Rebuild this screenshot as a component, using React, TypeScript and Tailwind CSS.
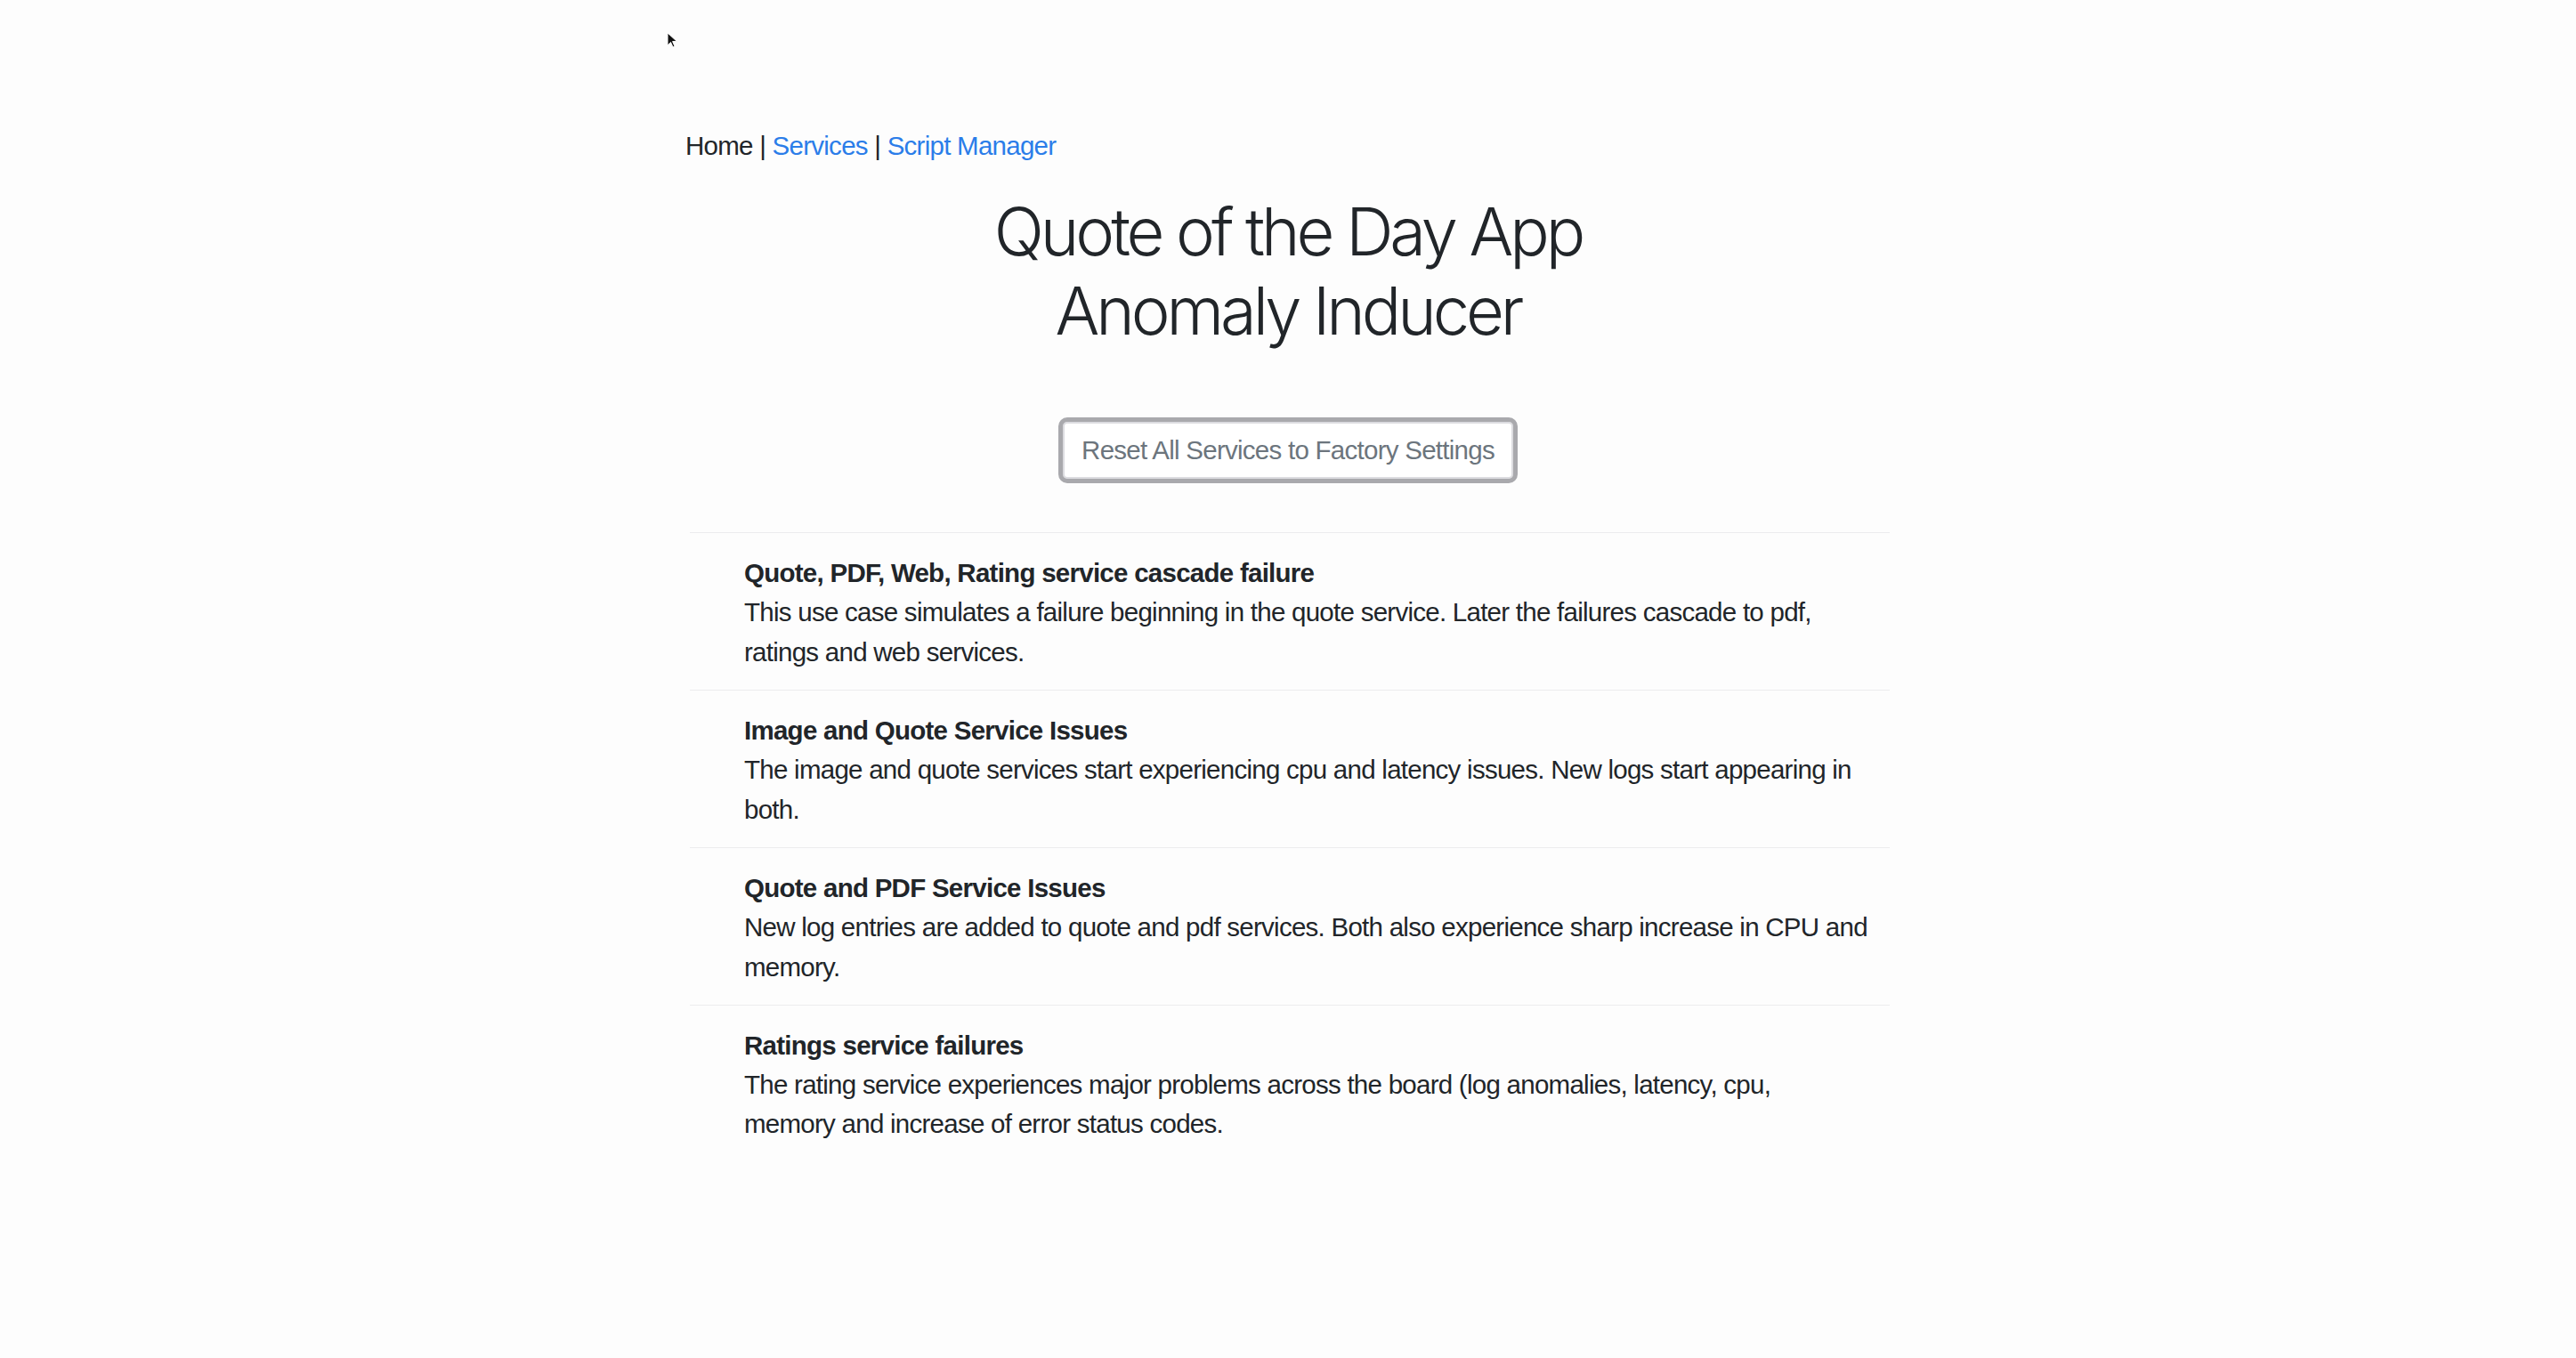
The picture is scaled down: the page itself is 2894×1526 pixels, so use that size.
import React from "react";

type Scenario = {
  id: string;
  title: string;
  // description split the way the page wraps it
  lines: string[];
};

const scenarios: Scenario[] = [
  {
    id: "cascade",
    title: "Quote, PDF, Web, Rating service cascade failure",
    lines: [
      "This use case simulates a failure beginning in the quote service. Later the failures cascade to pdf,",
      "ratings and web services.",
    ],
  },
  {
    id: "image-quote",
    title: "Image and Quote Service Issues",
    lines: [
      "The image and quote services start experiencing cpu and latency issues. New logs start appearing in",
      "both.",
    ],
  },
  {
    id: "quote-pdf",
    title: "Quote and PDF Service Issues",
    lines: [
      "New log entries are added to quote and pdf services. Both also experience sharp increase in CPU and",
      "memory.",
    ],
  },
  {
    id: "ratings",
    title: "Ratings service failures",
    lines: [
      "The rating service experiences major problems across the board (log anomalies, latency, cpu,",
      "memory and increase of error status codes.",
    ],
  },
];

function Cursor() {
  return (
    <svg
      className="absolute left-[749px] top-[36px]"
      width="14"
      height="20"
      viewBox="0 0 14 20"
    >
      <path d="M1 1 L1 15 L4.5 11.5 L7 17 L9 16 L6.6 10.6 L11.5 10.6 Z" fill="#111" stroke="#fff" strokeWidth="1" />
    </svg>
  );
}

export default function App() {
  return (
    <div className="relative min-h-screen bg-[#fdfdfd] font-['Liberation_Sans','Arial',sans-serif] text-[#212529]">
      <Cursor />

      <div className="mx-auto w-[1354px] pt-[142px] pb-[200px]">
        {/* nav */}
        <nav className="text-[29.5px] leading-[44px] tracking-[-0.025em]">
          Home |{" "}
          <a href="#" className="text-[#2b7de9]">Services</a> |{" "}
          <a href="#" className="text-[#2b7de9]">Script Manager</a>
        </nav>

        <h1 className="mt-[30px] text-center font-['Inter',sans-serif] text-[74px] leading-[88.6px] font-light tracking-[-0.055em]">
          Quote of the Day App
          <br />
          Anomaly Inducer
        </h1>

        <div className="mt-[76px] flex justify-center">
          <button className="h-[74px] w-[516px] rounded-[10px] border-[5px] border-[#a9a9ad] bg-white text-[29.5px] tracking-[-0.025em] text-[#6c757d] shadow-[inset_0_0_0_2px_#dcdce0]">
            Reset All Services to Factory Settings
          </button>
        </div>

        <ul className="mt-[55px] ml-[5px] w-[1348px]">
          {scenarios.map((s) => (
            <li
              key={s.id}
              className="border-t border-[#ececee] pt-[23px] pb-[20px] pl-[61px] pr-[19px] text-[29.5px] leading-[44.3px] tracking-[-0.025em]"
            >
              <div className="font-bold">{s.title}</div>
              {s.lines.map((line, i) => (
                <div key={i} className="whitespace-nowrap">{line}</div>
              ))}
            </li>
          ))}
        </ul>
      </div>
    </div>
  );
}
